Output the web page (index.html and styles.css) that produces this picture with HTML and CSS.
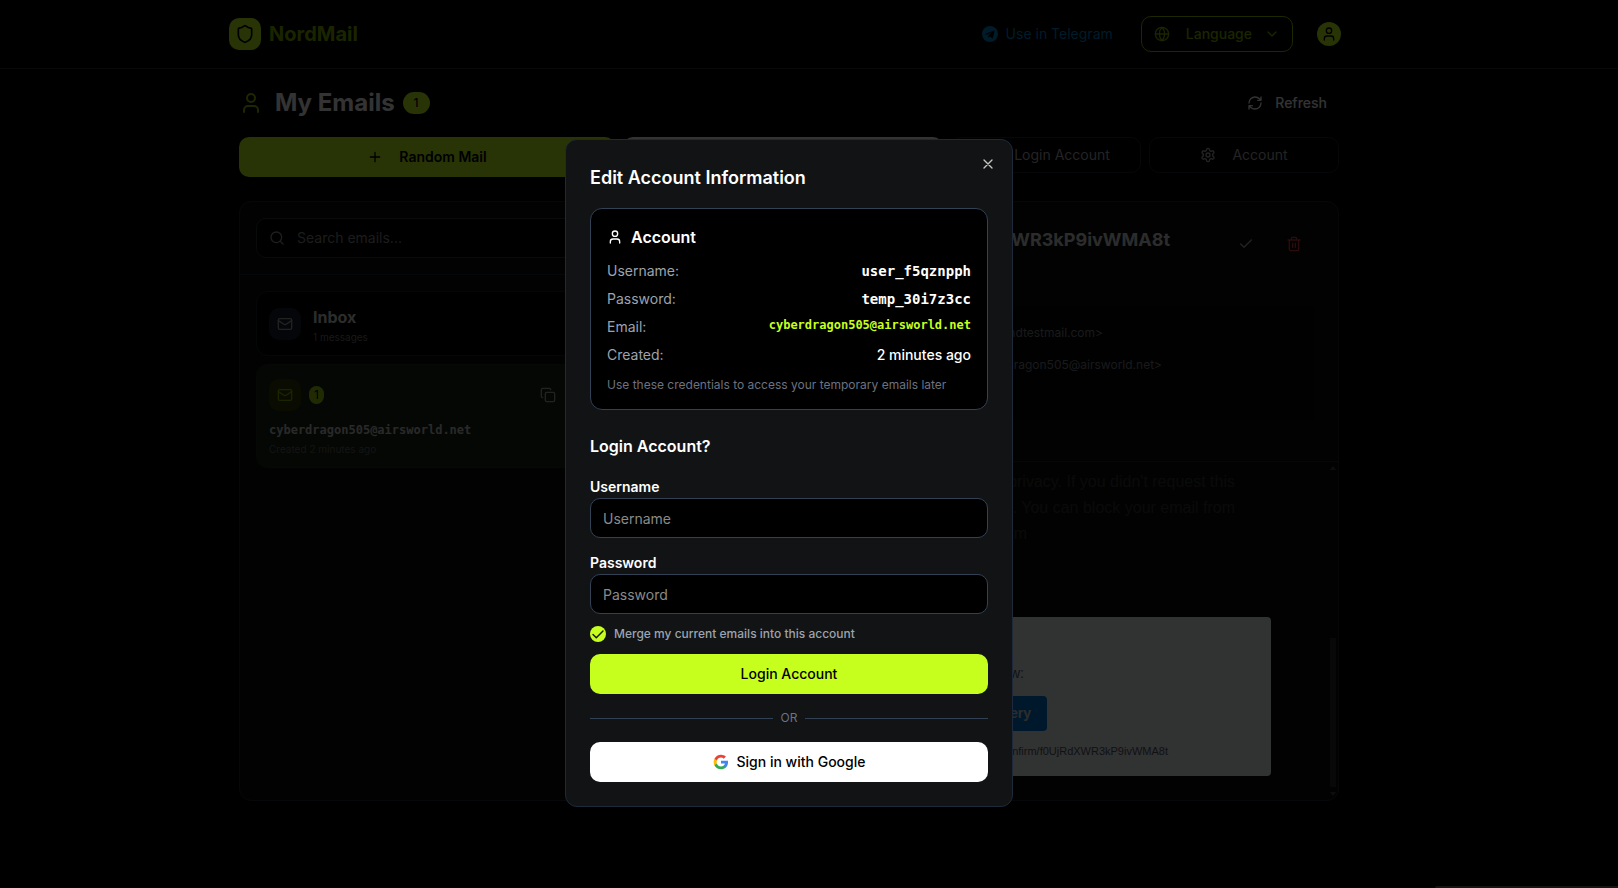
FILE: index.html
```html
<!DOCTYPE html>
<html lang="en">
<head>
<meta charset="utf-8">
<meta name="viewport" content="width=device-width, initial-scale=1">
<title>NordMail</title>
<link rel="stylesheet" href="styles.css">
</head>
<body>

<header class="topbar">
  <div class="topbar-inner">
    <a class="brand" href="#">
      <span class="brand-icon">
        <svg class="icon20" viewBox="0 0 24 24"><path d="M20 13c0 5-3.500 7.500-7.660 8.950a1 1 0 0 1-.67-.01C7.500 20.500 4 18 4 13V6a1 1 0 0 1 1-1c2 0 4.500-1.200 6.240-2.720a1.170 1.170 0 0 1 1.520 0C14.510 3.810 17 5 19 5a1 1 0 0 1 1 1z"/></svg>
      </span>
      NordMail
    </a>
    <nav class="topbar-nav">
      <a class="telegram" href="#">
        <svg class="icon16 telegram-icon" viewBox="0 0 24 24"><circle cx="12" cy="12" r="12" fill="#0088cc"/><path d="M4.500 11.900 17.700 6.700c.7-.3 1.200.1 1 .9l-2.200 10c-.2.8-.7 1-1.300.6l-3.400-2.500-1.700 1.600c-.3.3-.6.2-.6-.2l.1-3 6-5.500-7.600 4.700-3.300-1c-.7-.2-.7-.6-.2-.4z" fill="#000"/></svg>
        Use in Telegram
      </a>
      <button type="button" class="btn btn-language">
        <svg class="icon16 globe" viewBox="0 0 24 24"><circle cx="12" cy="12" r="10"/><path d="M12 2a14.500 14.500 0 0 0 0 20 14.500 14.500 0 0 0 0-20M2 12h20"/></svg>
        <span>Language</span>
        <svg class="icon16" viewBox="0 0 24 24"><path d="m6 9 6 6 6-6"/></svg>
      </button>
      <button type="button" class="avatar-btn" aria-label="Profile">
        <span class="avatar">
          <svg class="icon16" viewBox="0 0 24 24"><circle cx="12" cy="7" r="4"/><path d="M19 21v-2a4 4 0 0 0-4-4H9a4 4 0 0 0-4 4v2"/></svg>
        </span>
      </button>
    </nav>
  </div>
</header>

<main class="page">
  <div class="page-head">
    <svg class="icon24 lime" viewBox="0 0 24 24"><circle cx="12" cy="7" r="4"/><path d="M19 21v-2a4 4 0 0 0-4-4H9a4 4 0 0 0-4 4v2"/></svg>
    <h1>My Emails</h1>
    <span class="badge">1</span>
    <button type="button" class="btn btn-refresh">
      <svg class="icon16" viewBox="0 0 24 24"><path d="M3 12a9 9 0 0 1 9-9 9.750 9.750 0 0 1 6.740 2.740L21 8M21 3v5h-5M21 12a9 9 0 0 1-9 9 9.750 9.750 0 0 1-6.740-2.740L3 16M8 16H3v5"/></svg>
      Refresh
    </button>
  </div>

  <div class="actions">
    <button type="button" class="btn btn-random">
      <svg class="icon16" viewBox="0 0 24 24"><path d="M5 12h14M12 5v14"/></svg>
      Random Mail
    </button>
    <button type="button" class="btn btn-light" aria-label="Custom mail"></button>
    <button type="button" class="btn btn-outline">
      <svg class="icon16" viewBox="0 0 24 24"><path d="m10 17 5-5-5-5M15 12H3M15 3h4a2 2 0 0 1 2 2v14a2 2 0 0 1-2 2h-4"/></svg>
      Login Account
    </button>
    <button type="button" class="btn btn-outline">
      <svg class="icon16" viewBox="0 0 24 24"><path d="M12.220 2h-.44a2 2 0 0 0-2 2v.18a2 2 0 0 1-1 1.730l-.43.25a2 2 0 0 1-2 0l-.15-.08a2 2 0 0 0-2.730.73l-.22.38a2 2 0 0 0 .73 2.730l.15.1a2 2 0 0 1 1 1.720v.51a2 2 0 0 1-1 1.740l-.15.09a2 2 0 0 0-.73 2.730l.22.38a2 2 0 0 0 2.730.73l.15-.08a2 2 0 0 1 2 0l.43.25a2 2 0 0 1 1 1.730V20a2 2 0 0 0 2 2h.44a2 2 0 0 0 2-2v-.18a2 2 0 0 1 1-1.730l.43-.25a2 2 0 0 1 2 0l.15.08a2 2 0 0 0 2.730-.73l.22-.39a2 2 0 0 0-.73-2.730l-.15-.08a2 2 0 0 1-1-1.740v-.5a2 2 0 0 1 1-1.740l.15-.09a2 2 0 0 0 .73-2.730l-.22-.38a2 2 0 0 0-2.730-.73l-.15.08a2 2 0 0 1-2 0l-.43-.25a2 2 0 0 1-1-1.730V4a2 2 0 0 0-2-2z"/><circle cx="12" cy="12" r="3"/></svg>
      Account
    </button>
  </div>

  <div class="columns">
    <section class="panel">
      <div class="search-row">
        <div class="search">
          <svg class="icon16" viewBox="0 0 24 24"><circle cx="11" cy="11" r="8"/><path d="m21 21-4.300-4.300"/></svg>
          <input type="text" placeholder="Search emails..." aria-label="Search emails">
        </div>
      </div>
      <div class="mail-list">
        <div class="mail-card inbox">
          <span class="mail-icon">
            <svg class="icon16" viewBox="0 0 24 24"><rect x="2" y="4" width="20" height="16" rx="2"/><path d="m22 7-8.970 5.700a1.940 1.940 0 0 1-2.060 0L2 7"/></svg>
          </span>
          <div>
            <h2>Inbox</h2>
            <p class="tiny">1 messages</p>
          </div>
        </div>
        <div class="mail-card selected">
          <div class="mail-head">
            <span class="mail-icon">
              <svg class="icon16" viewBox="0 0 24 24"><rect x="2" y="4" width="20" height="16" rx="2"/><path d="m22 7-8.970 5.700a1.940 1.940 0 0 1-2.060 0L2 7"/></svg>
            </span>
            <span class="count">1</span>
            <button type="button" class="icon-btn copy" aria-label="Copy address">
              <svg class="icon16" viewBox="0 0 24 24"><rect x="8" y="8" width="14" height="14" rx="2"/><path d="M4 16c-1.100 0-2-.9-2-2V4c0-1.100.9-2 2-2h10c1.100 0 2 .9 2 2"/></svg>
            </button>
          </div>
          <p class="address">cyberdragon505@airsworld.net</p>
          <p class="tiny">Created 2 minutes ago</p>
        </div>
      </div>
    </section>

    <section class="panel reader">
      <div class="reader-head">
        <div class="reader-title">
          <h2>f0UjRdXWR3kP9ivWMA8t</h2>
          <button type="button" class="icon-btn" aria-label="Mark as read">
            <svg class="icon16" viewBox="0 0 24 24"><path d="M20 6 9 17l-5-5"/></svg>
          </button>
          <button type="button" class="icon-btn danger" aria-label="Delete">
            <svg class="icon16" viewBox="0 0 24 24"><path d="M3 6h18M19 6v14a2 2 0 0 1-2 2H7a2 2 0 0 1-2-2V6M8 6V4a2 2 0 0 1 2-2h4a2 2 0 0 1 2 2v2M10 11v6M14 11v6"/></svg>
          </button>
        </div>
        <div class="reader-meta">
          <p class="from">sendtestmail.com&gt;</p>
          <p class="to">&lt;cyberdragon505@airsworld.net&gt;</p>
        </div>
      </div>
      <div class="reader-body">
        <div class="reader-text">
          <p>privacy. If you didn't request this</p>
          <p>. You can block your email from</p>
          <p class="last">m</p>
          <div class="mail-box">
            <p class="short">below:</p>
            <a class="mail-cta" href="#">Delivery</a>
            <p class="link">confirm/f0UjRdXWR3kP9ivWMA8t</p>
          </div>
        </div>
        <div class="scrollbar">
          <svg class="arrow" viewBox="0 0 6 6"><path d="M3 1 6 5H0z"/></svg>
          <span class="thumb"></span>
          <svg class="arrow" viewBox="0 0 6 6"><path d="M3 5 0 1h6z"/></svg>
        </div>
      </div>
    </section>
  </div>
</main>

<div class="overlay">
  <div class="modal" role="dialog" aria-labelledby="modal-title">
    <button type="button" class="close" aria-label="Close">
      <svg class="icon16" viewBox="0 0 24 24"><path d="M18 6 6 18M6 6l12 12"/></svg>
    </button>
    <h2 id="modal-title">Edit Account Information</h2>

    <div class="account">
      <h3>
        <svg class="icon16" viewBox="0 0 24 24"><circle cx="12" cy="7" r="4"/><path d="M19 21v-2a4 4 0 0 0-4-4H9a4 4 0 0 0-4 4v2"/></svg>
        Account
      </h3>
      <dl>
        <div><dt>Username:</dt><dd class="mono">user_f5qznpph</dd></div>
        <div><dt>Password:</dt><dd class="mono">temp_30i7z3cc</dd></div>
        <div><dt>Email:</dt><dd class="mono email">cyberdragon505@airsworld.net</dd></div>
        <div><dt>Created:</dt><dd>2 minutes ago</dd></div>
      </dl>
      <p class="note">Use these credentials to access your temporary emails later</p>
    </div>

    <form class="login">
      <h3>Login Account?</h3>
      <div class="field">
        <label for="username">Username</label>
        <input type="text" id="username" placeholder="Username">
      </div>
      <div class="field">
        <label for="password">Password</label>
        <input type="password" id="password" placeholder="Password">
      </div>
      <div class="merge">
        <input type="checkbox" id="merge" checked>
        <label for="merge">Merge my current emails into this account</label>
      </div>
      <button type="button" class="btn btn-login">Login Account</button>
    </form>

    <div class="or">OR</div>

    <button type="button" class="btn btn-google">
      <svg class="google" viewBox="0 0 24 24"><path fill="#4285F4" d="M22.560 12.250c0-.78-.07-1.530-.2-2.250H12v4.260h5.920c-.26 1.370-1.040 2.530-2.210 3.310v2.770h3.570c2.080-1.920 3.280-4.740 3.280-8.090z"/><path fill="#34A853" d="M12 23c2.970 0 5.460-.98 7.280-2.660l-3.570-2.770c-.98.66-2.230 1.060-3.710 1.060-2.860 0-5.290-1.930-6.160-4.530H2.180v2.840C3.990 20.530 7.700 23 12 23z"/><path fill="#FBBC05" d="M5.840 14.090c-.22-.66-.35-1.360-.35-2.090s.13-1.430.35-2.090V7.070H2.180C1.430 8.550 1 10.220 1 12s.43 3.450 1.180 4.930l3.660-2.840z"/><path fill="#EA4335" d="M12 5.380c1.620 0 3.060.56 4.210 1.640l3.150-3.150C17.450 2.090 14.970 1 12 1 7.700 1 3.990 3.470 2.180 7.070l3.660 2.840c.87-2.600 3.300-4.530 6.160-4.530z"/></svg>
      Sign in with Google
    </button>
  </div>
  <div class="status-edge"></div>
</div>

</body>
</html>
```

FILE: styles.css
```css
* { box-sizing: border-box; }

body {
    margin: 0;
    min-height: 100vh;
    background: #000;
    color: #fff;
    font-family: Inter, "Liberation Sans", sans-serif;
    font-size: 14px;
    line-height: 20px;
    overflow: hidden;
}

h1, h2, h3, p, dl, dd { margin: 0; }
a { text-decoration: none; }
button, input { font: inherit; }

svg {
    flex: none;
    fill: none;
    stroke: currentColor;
    stroke-width: 2;
    stroke-linecap: round;
    stroke-linejoin: round;
}
.icon16 { width: 16px; height: 16px; }
.icon20 { width: 20px; height: 20px; }
.icon24 { width: 24px; height: 24px; }
.lime { color: #8fc800; }

.btn {
    display: flex;
    align-items: center;
    justify-content: center;
    height: 40px;
    border: 0;
    border-radius: 10px;
    background: none;
    color: inherit;
    font-weight: 500;
    cursor: pointer;
}

/* header */
.topbar {
    border-bottom: 1px solid #2c2f33;
    padding-right: 40px;
}
.topbar-inner {
    display: flex;
    align-items: center;
    justify-content: space-between;
    max-width: 1120px;
    height: 68px;
    margin: 0 auto;
}
.brand {
    display: flex;
    align-items: center;
    gap: 8px;
    color: #84b800;
    font-size: 20px;
    font-weight: 700;
}
.brand-icon {
    display: grid;
    place-items: center;
    width: 32px;
    height: 32px;
    border-radius: 10px;
    background: #c6ff1e;
    color: #000;
}
.topbar-nav { display: flex; align-items: center; }
.telegram {
    display: flex;
    align-items: center;
    gap: 8px;
    margin-right: 28px;
    color: #0088cc;
}
.telegram-icon { stroke: none; }
.btn-language {
    gap: 12px;
    height: 36px;
    margin-right: 16px;
    padding: 0 12px;
    border: 1px solid #90c400;
    color: #84b800;
}
.globe { margin-right: 4px; }
.avatar-btn {
    padding: 8px;
    border: 0;
    background: none;
    color: #000;
}
.avatar {
    display: grid;
    place-items: center;
    width: 24px;
    height: 24px;
    border-radius: 50%;
    background: #c6ff1e;
}

/* page */
.page {
    padding: 16px 40px 0 0;
}
.page-head, .actions, .columns {
    max-width: 1100px;
    margin: 0 auto;
}
.page-head { display: flex; align-items: center; height: 36px; }
h1 {
    margin: 0 8px 0 12px;
    font-size: 24px;
    line-height: 32px;
    font-weight: 700;
}
.badge {
    padding: 3px 11px;
    border-radius: 11px;
    background: #c6ff1e;
    color: #000;
    font-size: 12px;
    line-height: 16px;
    font-weight: 500;
}
.btn-refresh { gap: 12px; margin-left: auto; padding: 0 12px; }

.actions {
    display: grid;
    grid-template-columns: 376fr 320fr 190fr 190fr;
    align-items: start;
    gap: 8px;
    margin-top: 16px;
}
.btn-random { gap: 16px; background: #c6ff1e; color: #000; font-weight: 600; }
.btn-light { background: #fff; }
.btn-outline {
    gap: 16px;
    height: 36px;
    border: 1px solid #22262c;
    color: #b0b0b0;
    font-weight: 400;
}

.columns {
    display: grid;
    grid-template-columns: 1fr 2fr;
    gap: 24px;
    margin-top: 24px;
}
.panel {
    min-height: 600px;
    border: 1px solid #22272d;
    border-radius: 12px;
    background: #0c0e0e;
    overflow: hidden;
}
.search-row {
    padding: 16px;
    border-bottom: 1px solid #22272d;
}
.search {
    display: flex;
    align-items: center;
    gap: 12px;
    height: 40px;
    padding: 0 12px;
    border: 1px solid #2a323c;
    border-radius: 10px;
    background: #000;
    color: #999;
}
.search input {
    flex: 1;
    min-width: 0;
    padding: 0;
    border: 0;
    background: none;
    color: #fff;
}
.search input::placeholder { color: #8a8a8a; }

.mail-list {
    display: grid;
    gap: 8px;
    padding: 16px;
}
.mail-card {
    padding: 12px;
    border: 1px solid #1c2228;
    border-radius: 12px;
    background: #000;
}
.inbox {
    display: flex;
    align-items: center;
    gap: 12px;
    height: 65px;
}
.inbox h2 {
    margin-bottom: 2px;
    color: #ddd;
    font-size: 16px;
    line-height: 24px;
    font-weight: 700;
}
.tiny { color: #777; font-size: 10px; line-height: 12px; }
.mail-icon {
    display: grid;
    place-items: center;
    width: 32px;
    height: 32px;
    border-radius: 10px;
    background: #1a1f30;
    color: #aaa;
}
.selected { border-color: #1b2818; background: #1a2414; }
.selected .mail-icon { background: #323f08; color: #84b800; }
.selected .tiny { color: #606060; }
.mail-head { display: flex; align-items: center; gap: 8px; height: 36px; }
.count {
    padding: 1px 5px;
    border-radius: 9px;
    background: #a6d810;
    color: #000;
    font-size: 12px;
    line-height: 16px;
}
.icon-btn {
    display: grid;
    place-items: center;
    width: 40px;
    height: 36px;
    padding: 0;
    border: 0;
    background: none;
    color: #aaa;
}
.copy { margin-left: auto; }
.address {
    margin: 8px 0 4px;
    color: #ccc;
    font: bold 12px/18px "DejaVu Sans Mono", "Liberation Mono", monospace;
}

/* reader, lines end at the right of their block */
.reader { display: flex; flex-direction: column; }
.reader-head {
    height: 260px;
    padding: 24px;
    border-bottom: 1px solid #22272d;
}
.reader-title { display: flex; align-items: flex-start; gap: 8px; }
.reader-title h2 {
    flex: 1;
    padding-right: 48px;
    text-align: right;
    font-size: 18px;
    line-height: 28px;
    color: #ddd;
}
.danger { color: #dd3b3b; }
.reader-meta {
    height: 114px;
    margin-top: 44px;
    padding: 19px 0;
    background: #060707;
    color: #7a7f88;
    font-size: 12px;
    line-height: 16px;
    text-align: right;
}
.from { margin-bottom: 16px; padding-right: 211px; }
.to { padding-right: 152px; }
.reader-body {
    flex: 1;
    display: flex;
    padding-right: 2px;
    color: #333;
    font: 16px/26px "Liberation Sans", sans-serif;
    text-align: right;
}
.reader-text { flex: 1; padding: 7px 59px 0 0; }
.reader-text > p { padding-right: 36px; }
.reader-text > .last { padding-right: 244px; }
.mail-box {
    min-height: 159px;
    margin-top: 70px;
    padding: 46px 103px 0 0;
    border-radius: 4px;
    background: #f5f8fa;
    color: #555b66;
    font-size: 14px;
    line-height: 20px;
}
.mail-box .short { padding-right: 144px; }
.mail-cta {
    display: block;
    width: fit-content;
    margin: 13px 121px 12px auto;
    padding: 7px 16px 8px;
    border-radius: 4px;
    background: #007ad9;
    color: #e0e0e0;
    font-weight: bold;
}
.link { font-size: 11px; line-height: 16px; }
.scrollbar {
    display: flex;
    flex-direction: column;
    align-items: center;
    gap: 4px;
    padding: 3px 0;
}
.arrow { width: 6px; height: 6px; fill: #444; stroke: none; }
.thumb { width: 6px; height: 149px; margin-top: auto; background: #2c2c2c; }

/* dialog */
.overlay {
    position: fixed;
    inset: 0;
    display: flex;
    align-items: flex-start;
    justify-content: center;
    padding: 139px 40px 0 0;
    background: rgba(0, 0, 0, .8);
}
.modal {
    position: relative;
    width: 100%;
    max-width: 448px;
    padding: 24px;
    border: 1px solid #1e293b;
    border-radius: 12px;
    background: #111314;
}
.close {
    position: absolute;
    top: 16px;
    right: 16px;
    display: flex;
    padding: 0;
    border: 0;
    background: none;
    color: #c4c5c5;
}
.modal h2 { font-size: 18px; line-height: 28px; font-weight: 600; }
.modal h3 {
    display: flex;
    align-items: center;
    gap: 8px;
    font-size: 16px;
    line-height: 24px;
    font-weight: 600;
}
.account {
    margin: 16px 0 24px;
    padding: 16px;
    border: 1px solid #334155;
    border-radius: 12px;
    background: #000;
}
dl {
    display: grid;
    gap: 8px;
    margin: 12px 0;
}
dl div { display: flex; justify-content: space-between; }
dt { color: #9ca3af; }
dd { font-weight: 500; }
.mono {
    font-family: "DejaVu Sans Mono", "Liberation Mono", monospace;
    font-weight: 700;
}
.email { color: #c6ff1e; font-size: 12px; line-height: 16px; }
.note { color: #6b7280; font-size: 12px; line-height: 16px; }

.login { display: grid; gap: 12px; }
.login h3 { margin-bottom: 4px; }
.field label {
    display: block;
    padding-top: 2px;
    line-height: 22px;
    font-weight: 600;
}
.field input {
    display: block;
    width: 100%;
    height: 40px;
    padding: 0 12px;
    border: 1px solid #334155;
    border-radius: 10px;
    background: #000;
    color: #fff;
}
.field input::placeholder { color: #8a8a8a; }
.merge {
    display: flex;
    align-items: center;
    gap: 8px;
    color: #9ca3af;
    font-size: 12px;
    line-height: 16px;
    font-weight: 500;
}
.merge input {
    appearance: none;
    width: 16px;
    height: 16px;
    margin: 0;
    border-radius: 50%;
    background: #c6ff1e;
}
.merge input:checked {
    background-image: url("data:image/svg+xml,%3Csvg xmlns='http://www.w3.org/2000/svg' viewBox='0 0 16 16'%3E%3Cpath d='M3 8.500l3.300 3.200L13 5' fill='none' stroke='%23111314' stroke-width='1.400' stroke-linecap='round' stroke-linejoin='round'/%3E%3C/svg%3E");
}
.btn-login { background: #c6ff1e; color: #000; }
.or {
    display: flex;
    align-items: center;
    gap: 8px;
    margin: 16px 0;
    color: #6b7280;
    font-size: 12px;
    line-height: 16px;
}
.or::before, .or::after {
    content: "";
    flex: 1;
    height: 1px;
    background: #334155;
}
.btn-google {
    gap: 8px;
    width: 100%;
    background: #fff;
    color: #000;
}
.google { width: 16px; height: 16px; stroke: none; }

.status-edge {
    position: absolute;
    right: 0;
    bottom: 0;
    width: 183px;
    height: 2px;
    border-top-left-radius: 2px;
    background: #151515;
}
```
